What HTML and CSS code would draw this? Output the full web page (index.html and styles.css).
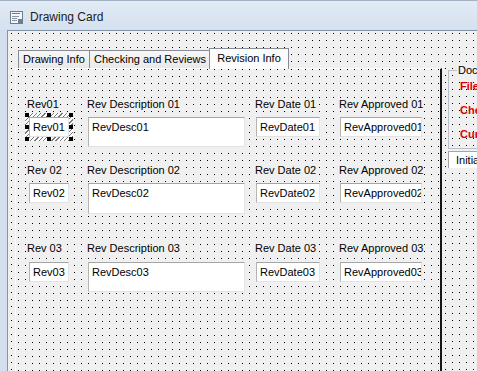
FILE: index.html
```html
<!DOCTYPE html>
<html lang="en">
<head>
    <meta charset="UTF-8">
    <meta name="viewport" content="width=device-width, initial-scale=1.0">
    <title>Drawing Card</title>
    <link rel="stylesheet" href="styles.css">
</head>
<body>

<div class="window">
    <div class="titleBar">
        <svg class="formIcon" width="13" height="13" viewBox="0 0 13 13">
            <rect x="0.5" y="0.5" width="12" height="12" fill="#f4f6f9" stroke="#6f7c8c"/>
            <rect x="2" y="2" width="8" height="1" fill="#6f7c8c"/>
            <rect x="2" y="5" width="7" height="1" fill="#8a95a3"/>
            <rect x="2" y="7" width="5" height="1" fill="#8a95a3"/>
            <rect x="2" y="9" width="5" height="1" fill="#8a95a3"/>
            <rect x="8" y="8" width="4" height="4" fill="#6f7c8c"/>
        </svg>
        <span class="titleText">Drawing Card</span>
    </div>

    <div class="frame">
        <div class="client grid">

            <div class="tabControl">
                <div class="tabStrip">
                    <div class="tab tabDrawing">Drawing Info</div>
                    <div class="tab tabChecking">Checking and Reviews</div>
                    <div class="tab tabRevision selected">Revision Info</div>
                </div>

                <div class="tabPage grid">

                    <!-- Revision 01 -->
                    <div class="revRow row1">
                        <div class="field colRev">
                            <span class="fieldLabel">Rev01</span>
                            <div class="selectedControl">
                                <div class="selectionFrame">
                                    <span class="grip gripTL"></span>
                                    <span class="grip gripTM"></span>
                                    <span class="grip gripTR"></span>
                                    <span class="grip gripML"></span>
                                    <span class="grip gripMR"></span>
                                    <span class="grip gripBL"></span>
                                    <span class="grip gripBM"></span>
                                    <span class="grip gripBR"></span>
                                </div>
                                <div class="textBox">Rev01</div>
                            </div>
                        </div>
                        <div class="field colDesc">
                            <span class="fieldLabel">Rev Description 01</span>
                            <div class="textBox multiLine">RevDesc01</div>
                        </div>
                        <div class="field colDate">
                            <span class="fieldLabel">Rev Date 01</span>
                            <div class="textBox">RevDate01</div>
                        </div>
                        <div class="field colApproved">
                            <span class="fieldLabel">Rev Approved 01</span>
                            <div class="textBox">RevApproved01</div>
                        </div>
                    </div>

                    <!-- Revision 02 -->
                    <div class="revRow row2">
                        <div class="field colRev">
                            <span class="fieldLabel">Rev 02</span>
                            <div class="textBox">Rev02</div>
                        </div>
                        <div class="field colDesc">
                            <span class="fieldLabel">Rev Description 02</span>
                            <div class="textBox multiLine">RevDesc02</div>
                        </div>
                        <div class="field colDate">
                            <span class="fieldLabel">Rev Date 02</span>
                            <div class="textBox">RevDate02</div>
                        </div>
                        <div class="field colApproved">
                            <span class="fieldLabel">Rev Approved 02</span>
                            <div class="textBox">RevApproved02</div>
                        </div>
                    </div>

                    <!-- Revision 03 -->
                    <div class="revRow row3">
                        <div class="field colRev">
                            <span class="fieldLabel">Rev 03</span>
                            <div class="textBox">Rev03</div>
                        </div>
                        <div class="field colDesc">
                            <span class="fieldLabel">Rev Description 03</span>
                            <div class="textBox multiLine">RevDesc03</div>
                        </div>
                        <div class="field colDate">
                            <span class="fieldLabel">Rev Date 03</span>
                            <div class="textBox">RevDate03</div>
                        </div>
                        <div class="field colApproved">
                            <span class="fieldLabel">Rev Approved 03</span>
                            <div class="textBox">RevApproved03</div>
                        </div>
                    </div>

                </div>
            </div>

            <div class="sidePanel">
                <fieldset class="docGroup">
                    <legend>Document Status</legend>
                    <div class="redLabel">File Name</div>
                    <div class="redLabel">Checked Out</div>
                    <div class="redLabel">Current Revision</div>
                </fieldset>
                <div class="initBox">Initial Issue</div>
            </div>

        </div>
    </div>
</div>

</body>
</html>
```

FILE: styles.css
```css
body {
    margin: 0;
    font-family: "Liberation Sans", Arial, sans-serif;
    font-size: 11px;
    color: #000;
    background-color: #fff;
}

.window {
    width: 477px;
    height: 371px;
    overflow: hidden;
    display: flex;
    flex-direction: column;
    background-color: #d3dfee;
}

.titleBar {
    height: 30px;
    flex-shrink: 0;
    box-sizing: border-box;
    display: flex;
    align-items: center;
    padding: 3px 0 0 10px;
    border-top: 1px solid #a3b2c4;
    background: linear-gradient(#e2ebf6, #d5e1ef);
}

.formIcon {
    margin-right: 7px;
}

.titleText {
    font-size: 12px;
    color: #1b1b1b;
}

.frame {
    flex: 1;
    min-height: 0;
    display: flex;
    padding-left: 7px;
}

/* designer grid dots */
.grid {
    background-color: #f0f0f0;
    background-image: conic-gradient(from 270deg at 1px 1px, #000 90deg, transparent 0);
    background-size: 7px 7px;
}

.client {
    flex: 1;
    display: flex;
    border-left: 1px solid #8494a8;
    border-top: 1px solid #8494a8;
    padding: 17px 0 0 7px;
    background-position: 3px 2px;
}

.tabControl {
    width: 427px;
    flex-shrink: 0;
    display: flex;
    flex-direction: column;
}

.tabStrip {
    height: 20px;
    display: flex;
    align-items: flex-end;
    padding-left: 3px;
}

.tab {
    height: 18px;
    box-sizing: border-box;
    border: 1px solid #898c95;
    border-bottom: none;
    background: linear-gradient(#f7f7f7, #e9e9e9);
    text-align: center;
    line-height: 17px;
    white-space: nowrap;
}

.tabDrawing {
    width: 72px;
}

.tabChecking {
    width: 122px;
    margin-left: -1px;
}

.tab.selected {
    width: 80px;
    height: 21px;
    margin: 0 0 -1px -2px;
    position: relative;
    z-index: 1;
    background: #fcfcfc;
    line-height: 19px;
}

.tabPage {
    flex: 1;
    border-top: 1px solid #fdfdfd;
    border-left: 1px solid #fdfdfd;
    border-right: 2px solid #161616;
    padding-top: 29px;
    background-position: 2px 0;
}

.revRow {
    display: flex;
    align-items: flex-start;
}

.row2 {
    margin-top: 17px;
}

.row3 {
    margin-top: 28px;
}

.field {
    display: flex;
    flex-direction: column;
    align-items: flex-start;
}

.fieldLabel {
    line-height: 13px;
    padding: 0 1px;
    margin: 0 0 6px -2px;
    background-color: #f0f0f0;
    white-space: nowrap;
}

.row3 .fieldLabel {
    margin-bottom: 7px;
}

.colRev {
    width: 40px;
    margin-left: 13px;
}

.colRev .fieldLabel {
    margin-left: -3px;
}

.colDesc {
    width: 157px;
    margin-left: 19px;
}

.colDate {
    width: 64px;
    margin-left: 11px;
}

.colApproved {
    width: 82px;
    margin-left: 20px;
}

.textBox {
    width: 100%;
    height: 20px;
    box-sizing: border-box;
    padding: 2px 3px;
    line-height: 15px;
    background-color: #fff;
    border: 1px solid #e3e3e3;
    border-top-color: #a5a5a5;
    border-left-color: #b4b4b4;
    white-space: nowrap;
    overflow: hidden;
    position: relative;
    z-index: 1;
}

.textBox.multiLine {
    height: 30px;
}

.row2 .textBox.multiLine {
    height: 31px;
}

/* selection adorner of the active control */
.selectedControl {
    width: 100%;
    position: relative;
}

.selectionFrame {
    position: absolute;
    top: -4px;
    left: -4px;
    right: -4px;
    bottom: -4px;
    background: repeating-linear-gradient(135deg, #fdfdfd 0 2px, #777 2px 3px);
}

.grip {
    position: absolute;
    width: 4px;
    height: 4px;
    background-color: #000;
    z-index: 2;
}

.gripTL { top: 0; left: 0; }
.gripTM { top: 0; left: 22px; }
.gripTR { top: 0; right: 0; }
.gripML { top: 12px; left: 0; }
.gripMR { top: 12px; right: 0; }
.gripBL { bottom: 0; left: 0; }
.gripBM { bottom: 0; left: 22px; }
.gripBR { bottom: 0; right: 0; }

.sidePanel {
    width: 120px;
    flex-shrink: 0;
    padding: 16px 0 0 6px;
}

.docGroup {
    margin: 0;
    padding: 0 0 7px 8px;
    border: 1px solid #b9c0c7;
    border-right: none;
    background-color: transparent;
}

.docGroup legend {
    padding: 0 1px;
    line-height: 13px;
    white-space: nowrap;
    background-color: #f0f0f0;
}

.redLabel {
    margin: 2px 0 0 3px;
    line-height: 14px;
    font-weight: bold;
    color: #e00000;
    white-space: nowrap;
}

.redLabel + .redLabel {
    margin-top: 10px;
}

.initBox {
    margin-top: 2px;
    height: 17px;
    box-sizing: border-box;
    padding-left: 7px;
    line-height: 16px;
    background-color: #fff;
    border-top: 1px solid #a5a5a5;
    border-left: 1px solid #a5a5a5;
    white-space: nowrap;
}
```
